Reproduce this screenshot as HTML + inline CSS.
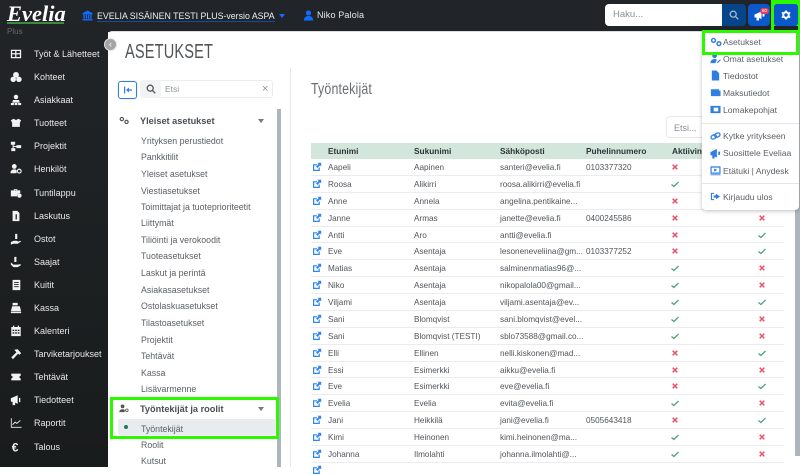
<!DOCTYPE html>
<html lang="fi"><head><meta charset="utf-8"><title>Evelia</title>
<style>
*{box-sizing:border-box}
html,body{margin:0;padding:0}
body{width:800px;height:467px;overflow:hidden;position:relative;background:#fff;font-family:"Liberation Sans",sans-serif;color:#4a4f54;font-size:9px}
.a{position:absolute;white-space:nowrap}
#top{left:0;top:0;width:800px;height:32px;background:#212529}
#side{left:0;top:0;width:108px;height:467px;background:linear-gradient(#212528,#191c1c)}
#main{left:108px;top:32px;width:692px;height:435px;background:#fff;border-top-left-radius:4px;box-shadow:0 -1px 0 #ddd}
.n{position:absolute;left:0;width:108px;height:20px;color:#e8e8e8;font-size:9px;line-height:20px;padding-left:34px;white-space:nowrap}
.n svg{position:absolute;left:10px;top:4px;width:12px;height:12px;fill:#f2f2f2}
.m{position:absolute;left:141px;font-size:8.8px;color:#5b6065;line-height:14px;white-space:nowrap}
.h{position:absolute;left:140px;font-size:9.2px;font-weight:bold;color:#4a4f54;line-height:14px;white-space:nowrap}
.car{position:absolute;width:0;height:0;border-left:3.5px solid transparent;border-right:3.5px solid transparent;border-top:4px solid #777}
#tb{left:311px;top:143px;width:473px}
.th{height:16px;background:#d2e6dc;position:relative;font-weight:bold;color:#2f3336;font-size:8.3px;line-height:16px}
.r{height:16.88px;position:relative;border-bottom:1px solid #ececec;line-height:17px;font-size:8.2px;color:#50555a}
.r span,.th span{position:absolute;white-space:nowrap}
.c1{left:17px}.c2{left:103px}.c3{left:189px}.c4{left:275px}
.r svg{position:absolute;width:10px;height:10px;top:3px}
.e{left:1px;fill:#2f86ee}
.k1{left:359px}.k2{left:446px}
.x{stroke:#e8556a;stroke-width:1.5;fill:none}
.v{stroke:#4fa37c;stroke-width:1.3;fill:none}
#dd{left:702px;top:30px;width:97px;height:180px;background:#fff;border-radius:4px;box-shadow:0 1px 4px rgba(0,0,0,.25)}
.d{position:absolute;left:723px;font-size:8.6px;color:#5b6065;line-height:14px;white-space:nowrap}
.di{position:absolute;left:710px;width:11px;height:11px;fill:#2f7fe0}
.g{position:absolute;border:3px solid #2cf800}
</style></head><body>
<svg width="0" height="0" style="position:absolute">
<symbol id="ext" viewBox="0 0 10 10"><path d="M1 2.200h4v1.200H2.200v4.400h4.400V5.500h1.200V9H1zM5.500.8H9.200V4.500L8 3.400 5.400 6 4 4.600 6.600 2z"/></symbol>
<symbol id="xx" viewBox="0 0 10 10"><path d="M2.700 2.700l4.600 4.600M7.300 2.700l-4.600 4.600"/></symbol>
<symbol id="ck" viewBox="0 0 10 10"><path d="M1.500 5.500l2.400 2L8.500 3"/></symbol>
<symbol id="gears" viewBox="0 0 14 12"><circle cx="4" cy="4" r="2.3" fill="none" stroke="currentColor" stroke-width="1.7"/><circle cx="10.5" cy="8" r="2.3" fill="none" stroke="currentColor" stroke-width="1.7"/></symbol>
</svg>

<div class="a" id="top"></div>
<div class="a" id="side"></div>

<div class="a" style="left:7px;top:2px;font:italic bold 22.5px/23px 'Liberation Serif',serif;color:#fff">Evelia</div>
<div class="a" style="left:7px;top:22px;width:57px;height:2px;background:#3c8a3c"></div>
<div class="a" style="left:7px;top:26px;font-size:8px;color:#63686c;line-height:12px">Plus</div>

<div class="n" style="top:44px"><svg viewBox="0 0 14 14"><path d="M1 2h12v10H1zM2.500 3.500v2.500h3.500V3.500zM7.500 3.500v2.500h4V3.500zM2.500 7.500v3h3.500v-3zM7.500 7.500v3h4v-3z" fill-rule="evenodd"/></svg>Työt &amp; Lähetteet</div>
<div class="n" style="top:67px"><svg viewBox="0 0 14 14"><circle cx="7" cy="4.500" r="3.400"/><circle cx="3.800" cy="9.700" r="3.200"/><circle cx="10.400" cy="9.700" r="3.200"/></svg>Kohteet</div>
<div class="n" style="top:90px"><svg viewBox="0 0 14 14"><circle cx="7" cy="3.500" r="2.600"/><path d="M3.500 7h7l1 3h-9zM1 10.500h3.500V13H1zM5.400 10.500h3.200V13H5.400zM9.500 10.500H13V13H9.500z"/></svg>Asiakkaat</div>
<div class="n" style="top:113px"><svg viewBox="0 0 14 14"><path d="M1 4l3-2 3 1.500L10 2l3 2-1.500 2.500v5h-9v-5z"/></svg>Tuotteet</div>
<div class="n" style="top:136px"><svg viewBox="0 0 14 14"><path d="M1 2h5v3.500H4.200V7h3.300V6h5.500v3.500H7.500V8.200H4.200v1.300h2V13H1.500V9.500h1.500v-4H1z"/></svg>Projektit</div>
<div class="n" style="top:159px"><svg viewBox="0 0 14 14"><circle cx="5" cy="4" r="2.800"/><path d="M.5 12c0-3 2-4.500 4.500-4.500 1.200 0 2 .3 2.700.8V12z"/><circle cx="10.800" cy="9.500" r="2.200" fill="none" stroke="#f2f2f2" stroke-width="1.400"/></svg>Henkilöt</div>
<div class="n" style="top:183px"><svg viewBox="0 0 14 14"><path d="M4.500 2.500h4v1.500H12V7a4 4 0 0 0-4 4H1V4h3.500zM5.500 3.300V4h2v-.7z"/><circle cx="11" cy="10" r="2.500"/></svg>Tuntilappu</div>
<div class="n" style="top:206px"><svg viewBox="0 0 14 14"><path d="M3 1h5.500L11 3.500V13H3zM6.500 5v6h1.500V5z" fill-rule="evenodd"/></svg>Laskutus</div>
<div class="n" style="top:229px"><svg viewBox="0 0 14 14"><path d="M6 1h2.500v6H6zM1 10.500l3.500-1.500H8l1.500 1 2.500-1 1 .7-4 2.800H4L1 13.500z"/></svg>Ostot</div>
<div class="n" style="top:252px"><svg viewBox="0 0 14 14"><path d="M5 1h2.500v6H5zM1 7.500l3 2.500h5l3.500-.5v1.500L9 13H4l-3-3z"/></svg>Saajat</div>
<div class="n" style="top:275px"><svg viewBox="0 0 14 14"><path d="M3 1h9v12H3zM4.800 3.500v1h5.400v-1zM4.800 6v1h5.400V6zM4.800 8.500v1h5.400v-1z" fill-rule="evenodd"/></svg>Kuitit</div>
<div class="n" style="top:298px"><svg viewBox="0 0 14 14"><path d="M3 1h6v3H3zM2.500 5h9l1.500 6H1zM1 11.500h12V13H1z"/></svg>Kassa</div>
<div class="n" style="top:321px"><svg viewBox="0 0 14 14"><path d="M3.500.8h1.500v1.500h4V.8h1.500v1.500H12.500V13H1.500V2.300h2zM3 5.500V7h2V5.500zM6 5.500V7h2V5.500zM9 5.500V7h2V5.500zM3 8.500V10h2V8.500zM6 8.500V10h2V8.500zM9 8.500V10h2V8.500z" fill-rule="evenodd"/></svg>Kalenteri</div>
<div class="n" style="top:344px"><svg viewBox="0 0 14 14"><path d="M5 2l4-.5 4 4.500-2 2-1.500-1.500L3.500 13 1.500 11 7.500 5z"/></svg>Tarviketarjoukset</div>
<div class="n" style="top:367px"><svg viewBox="0 0 14 14"><path d="M1.500 3h11v2.500a1.500 1.500 0 0 0 0 3V11h-11V8.500a1.500 1.500 0 0 0 0-3z"/></svg>Tehtävät</div>
<div class="n" style="top:390px"><svg viewBox="0 0 14 14"><path d="M1 5l8-3.500v10L6 10v3H3V9H1zM10.500 4.500h1.500v5h-1.500z"/></svg>Tiedotteet</div>
<div class="n" style="top:413px"><svg viewBox="0 0 14 14"><path d="M1 1.500h1V11.500h11.500v1H1z"/><path d="M3 9l3-3 2 1.500 4-3.500" fill="none" stroke="#f2f2f2" stroke-width="1.100"/></svg>Raportit</div>
<div class="n" style="top:437px"><svg viewBox="0 0 14 14"><text x="2" y="12" font-size="14" font-weight="bold" font-family="Liberation Sans" fill="#f2f2f2">€</text></svg>Talous</div>

<svg class="a" style="left:82px;top:10px;width:11px;height:11px;fill:#0d6efd" viewBox="0 0 12 12"><path d="M6 .5l5.500 3V5H.5V3.500zM1.500 5.500h1.500V9.500H1.500zM4 5.500h1.500V9.500H4zM6.500 5.500H8V9.500H6.500zM9 5.500h1.500V9.500H9zM.5 10h11v1.500H.5z"/></svg>
<div class="a" style="left:97px;top:9px;font-size:8.8px;color:#eceef0;line-height:14px;border-bottom:1px solid #0f4f9c;height:13px">EVELIA SISÄINEN TESTI PLUS-versio ASPA</div>
<div class="car" style="left:279px;top:14px;border-top:4px solid #0d6efd"></div>
<svg class="a" style="left:303px;top:10px;width:11px;height:11px;fill:#0d6efd" viewBox="0 0 12 12"><circle cx="6" cy="3.200" r="2.800"/><path d="M1 11.500c0-3.500 2-5 5-5s5 1.500 5 5z"/></svg>
<div class="a" style="left:317px;top:8px;font-size:9px;letter-spacing:.15px;color:#e6e8ea;line-height:14px">Niko Palola</div>

<div class="a" style="left:605px;top:4px;width:118px;height:22px;background:#fff;border-radius:4px 0 0 4px;color:#8a8f94;font-size:9.500px;line-height:22px;padding-left:8px">Haku...</div>
<div class="a" style="left:722px;top:4px;width:24px;height:22px;background:#06458a;border-radius:0 4px 4px 0"></div>
<svg class="a" style="left:729px;top:10px;width:10px;height:10px" viewBox="0 0 10 10" fill="none" stroke="#9fb8d4" stroke-width="1.300"><circle cx="4.200" cy="4.200" r="3"/><path d="M6.500 6.500L9.300 9.300"/></svg>
<div class="a" style="left:748px;top:4px;width:22px;height:22px;background:#0a58ca;border-radius:4px"></div>
<svg class="a" style="left:754px;top:11px;width:11px;height:10px;fill:#fff" viewBox="0 0 11 10"><path d="M.5 3.500l7-3V8L5 7v2.500H2.500V6.500H.5zM8.500 2.500h2v3h-2z"/></svg>
<div class="a" style="left:760px;top:8px;width:9px;height:6px;background:#e8405a;border-radius:3px;color:#fff;font-size:4.500px;line-height:6px;text-align:center">60</div>

<div class="a" id="main"></div>

<div class="a" style="left:104px;top:38px;width:13px;height:13px;border-radius:50%;background:#a3a5a7;border:1px solid #e4e4e4;color:#fff;font-size:9px;line-height:10px;text-align:center">‹</div>

<div class="a" style="left:125px;top:41px;font-size:20px;line-height:23px;color:#505457;transform:scaleX(.73);transform-origin:0 0;letter-spacing:.2px">ASETUKSET</div>

<div class="a" style="left:290px;top:68px;width:1px;height:399px;background:#e6e8ec"></div>
<div class="a" style="left:118px;top:81px;width:19px;height:18px;border:1px solid #2f7fe0;border-radius:3px;box-shadow:0 0 1px #8ab8ee"></div>
<svg class="a" style="left:123px;top:85px;width:10px;height:10px" viewBox="0 0 10 10" fill="#2f7fe0"><path d="M1 1.500h1.200V8.500H1zM9 4.400H6V2.500L3 5l3 2.500V5.600h3z"/></svg>
<div class="a" style="left:140px;top:80px;width:133px;height:18px;background:#fff;border:1px solid #ececec;border-radius:3px"></div>
<div class="a" style="left:140px;top:80px;width:21px;height:18px;background:#f2f3f4;border-radius:3px 0 0 3px"></div>
<svg class="a" style="left:146px;top:84px;width:10px;height:10px" viewBox="0 0 10 10" fill="none" stroke="#555" stroke-width="1.300"><circle cx="4.200" cy="4.200" r="3"/><path d="M6.500 6.500L9.300 9.300"/></svg>
<div class="a" style="left:165px;top:82px;font-size:8.500px;color:#8d9296;line-height:14px">Etsi</div>
<div class="a" style="left:262px;top:82px;font-size:11px;color:#8d9296;line-height:14px">×</div>

<div class="a" style="left:277px;top:109px;width:4px;height:358px;background:#adb5bd"></div>

<svg class="a" style="left:119px;top:116px;width:10px;height:9px;color:#555" viewBox="0 0 14 12"><use href="#gears"/></svg>
<div class="h" style="top:114px">Yleiset asetukset</div>
<div class="car" style="left:258px;top:119px"></div>
<div class="m" style="top:134px">Yrityksen perustiedot</div>
<div class="m" style="top:150px">Pankkitilit</div>
<div class="m" style="top:167px">Yleiset asetukset</div>
<div class="m" style="top:184px">Viestiasetukset</div>
<div class="m" style="top:200px">Toimittajat ja tuoteprioriteetit</div>
<div class="m" style="top:216px">Liittymät</div>
<div class="m" style="top:233px">Tiliöinti ja verokoodit</div>
<div class="m" style="top:249px">Tuoteasetukset</div>
<div class="m" style="top:266px">Laskut ja perintä</div>
<div class="m" style="top:283px">Asiakasasetukset</div>
<div class="m" style="top:299px">Ostolaskuasetukset</div>
<div class="m" style="top:316px">Tilastoasetukset</div>
<div class="m" style="top:333px">Projektit</div>
<div class="m" style="top:349px">Tehtävät</div>
<div class="m" style="top:366px">Kassa</div>
<div class="m" style="top:382px">Lisävarmenne</div>

<div class="a" style="left:118px;top:419px;width:157px;height:16px;background:#e9ecef;border-radius:2px"></div>
<div class="a" style="left:124px;top:425px;width:4px;height:4px;border-radius:50%;background:#1b7c5c"></div>
<svg class="a" style="left:119px;top:404px;width:10px;height:9px;fill:#555" viewBox="0 0 14 12"><circle cx="5" cy="3" r="2.600"/><path d="M.5 11c0-3 2-4 4.500-4 1.500 0 2.500.4 3 1v3z"/><circle cx="11" cy="8.500" r="1.800" fill="none" stroke="#555" stroke-width="1.200"/></svg>
<div class="h" style="top:402px">Työntekijät ja roolit</div>
<div class="car" style="left:258px;top:407px"></div>
<div class="m" style="top:422px">Työntekijät</div>
<div class="m" style="top:438px">Roolit</div>
<div class="m" style="top:454px">Kutsut</div>
<div class="g" style="left:110px;top:397px;width:169px;height:42px"></div>

<div class="a" style="left:311px;top:81px;font-size:15.500px;line-height:18px;color:#6a6e72;transform:scaleX(.8);transform-origin:0 0;letter-spacing:.2px">Työntekijät</div>

<div class="a" style="left:666px;top:116px;width:60px;height:22px;border:1px solid #e8e8e8;border-radius:4px;color:#8a8f94;font-size:9px;line-height:22px;padding-left:7px">Etsi...</div>

<div class="a" id="tb">
<div class="th"><span class="c1">Etunimi</span><span class="c2">Sukunimi</span><span class="c3">Sähköposti</span><span class="c4">Puhelinnumero</span><span style="left:361px">Aktiivinen</span></div>
<div class="r"><svg class="e"><use href="#ext"/></svg><span class="c1">Aapeli</span><span class="c2">Aapinen</span><span class="c3">santeri@evelia.fi</span><span class="c4">0103377320</span><svg class="k1 x"><use href="#xx"/></svg></div>
<div class="r"><svg class="e"><use href="#ext"/></svg><span class="c1">Roosa</span><span class="c2">Alikirri</span><span class="c3">roosa.alikirri@evelia.fi</span><svg class="k1 v"><use href="#ck"/></svg></div>
<div class="r"><svg class="e"><use href="#ext"/></svg><span class="c1">Anne</span><span class="c2">Annela</span><span class="c3">angelina.pentikaine...</span><svg class="k1 x"><use href="#xx"/></svg></div>
<div class="r"><svg class="e"><use href="#ext"/></svg><span class="c1">Janne</span><span class="c2">Armas</span><span class="c3">janette@evelia.fi</span><span class="c4">0400245586</span><svg class="k1 x"><use href="#xx"/></svg><svg class="k2 x"><use href="#xx"/></svg></div>
<div class="r"><svg class="e"><use href="#ext"/></svg><span class="c1">Antti</span><span class="c2">Aro</span><span class="c3">antti@evelia.fi</span><svg class="k1 x"><use href="#xx"/></svg><svg class="k2 v"><use href="#ck"/></svg></div>
<div class="r"><svg class="e"><use href="#ext"/></svg><span class="c1">Eve</span><span class="c2">Asentaja</span><span class="c3">lesoneneveliina@gm...</span><span class="c4">0103377252</span><svg class="k1 x"><use href="#xx"/></svg><svg class="k2 v"><use href="#ck"/></svg></div>
<div class="r"><svg class="e"><use href="#ext"/></svg><span class="c1">Matias</span><span class="c2">Asentaja</span><span class="c3">salminenmatias96@...</span><svg class="k1 v"><use href="#ck"/></svg><svg class="k2 x"><use href="#xx"/></svg></div>
<div class="r"><svg class="e"><use href="#ext"/></svg><span class="c1">Niko</span><span class="c2">Asentaja</span><span class="c3">nikopalola00@gmail...</span><svg class="k1 v"><use href="#ck"/></svg><svg class="k2 x"><use href="#xx"/></svg></div>
<div class="r"><svg class="e"><use href="#ext"/></svg><span class="c1">Viljami</span><span class="c2">Asentaja</span><span class="c3">viljami.asentaja@ev...</span><svg class="k1 v"><use href="#ck"/></svg><svg class="k2 v"><use href="#ck"/></svg></div>
<div class="r"><svg class="e"><use href="#ext"/></svg><span class="c1">Sani</span><span class="c2">Blomqvist</span><span class="c3">sani.blomqvist@evel...</span><svg class="k1 v"><use href="#ck"/></svg><svg class="k2 x"><use href="#xx"/></svg></div>
<div class="r"><svg class="e"><use href="#ext"/></svg><span class="c1">Sani</span><span class="c2">Blomqvist (TESTI)</span><span class="c3">sblo73588@gmail.co...</span><svg class="k1 v"><use href="#ck"/></svg><svg class="k2 x"><use href="#xx"/></svg></div>
<div class="r"><svg class="e"><use href="#ext"/></svg><span class="c1">Elli</span><span class="c2">Ellinen</span><span class="c3">nelli.kiskonen@mad...</span><svg class="k1 x"><use href="#xx"/></svg><svg class="k2 v"><use href="#ck"/></svg></div>
<div class="r"><svg class="e"><use href="#ext"/></svg><span class="c1">Essi</span><span class="c2">Esimerkki</span><span class="c3">aikku@evelia.fi</span><svg class="k1 x"><use href="#xx"/></svg><svg class="k2 x"><use href="#xx"/></svg></div>
<div class="r"><svg class="e"><use href="#ext"/></svg><span class="c1">Eve</span><span class="c2">Esimerkki</span><span class="c3">eve@evelia.fi</span><svg class="k1 x"><use href="#xx"/></svg><svg class="k2 v"><use href="#ck"/></svg></div>
<div class="r"><svg class="e"><use href="#ext"/></svg><span class="c1">Evelia</span><span class="c2">Evelia</span><span class="c3">evita@evelia.fi</span><svg class="k1 v"><use href="#ck"/></svg><svg class="k2 x"><use href="#xx"/></svg></div>
<div class="r"><svg class="e"><use href="#ext"/></svg><span class="c1">Jani</span><span class="c2">Heikkilä</span><span class="c3">jani@evelia.fi</span><span class="c4">0505643418</span><svg class="k1 x"><use href="#xx"/></svg><svg class="k2 v"><use href="#ck"/></svg></div>
<div class="r"><svg class="e"><use href="#ext"/></svg><span class="c1">Kimi</span><span class="c2">Heinonen</span><span class="c3">kimi.heinonen@ma...</span><svg class="k1 v"><use href="#ck"/></svg><svg class="k2 x"><use href="#xx"/></svg></div>
<div class="r"><svg class="e"><use href="#ext"/></svg><span class="c1">Johanna</span><span class="c2">Ilmolahti</span><span class="c3">johanna.ilmolahti@...</span><svg class="k1 v"><use href="#ck"/></svg><svg class="k2 x"><use href="#xx"/></svg></div>
</div>
<svg class="a" style="left:312px;top:465px;width:10px;height:10px;fill:#2f86ee"><use href="#ext"/></svg>

<div class="a" style="left:795px;top:32px;width:5px;height:424px;background:#adb5bd"></div>

<div class="a" id="dd"></div>
<svg class="a" style="left:710px;top:37px;width:12px;height:10px;color:#2f7fe0" viewBox="0 0 14 12"><use href="#gears"/></svg>
<div class="d" style="top:35px">Asetukset</div>
<svg class="di" style="top:53px" viewBox="0 0 12 12"><circle cx="5" cy="3" r="2.600"/><path d="M.5 11c0-3 2-4.500 4.500-4.500 1.200 0 2 .3 2.500.6L6 11zM7.500 10l3.500-3 .8.800L8.500 11z"/></svg>
<div class="d" style="top:52px">Omat asetukset</div>
<svg class="di" style="top:70px" viewBox="0 0 12 12"><path d="M2 .5h5l3 3v8H2z"/></svg>
<div class="d" style="top:69px">Tiedostot</div>
<svg class="di" style="top:87px" viewBox="0 0 12 12"><path d="M1 2.500h9V4h1.500v6H1z"/></svg>
<div class="d" style="top:86px">Maksutiedot</div>
<svg class="di" style="top:104px" viewBox="0 0 12 12"><path d="M.5 2h11v8H.5zM4 4v4h5V4z" fill-rule="evenodd"/></svg>
<div class="d" style="top:103px">Lomakepohjat</div>
<div class="a" style="left:702px;top:123px;width:97px;height:1px;background:#e6e6e6"></div>
<svg class="a" style="left:710px;top:131px;width:11px;height:10px" viewBox="0 0 12 10" fill="none" stroke="#2f7fe0" stroke-width="1.400"><rect x="1" y="4" width="6" height="4" rx="2" transform="rotate(-25 4 6)"/><rect x="5" y="2" width="6" height="4" rx="2" transform="rotate(-25 8 4)"/></svg>
<div class="d" style="top:129px">Kytke yritykseen</div>
<svg class="di" style="top:148px" viewBox="0 0 12 12"><path d="M.5 4.500l7-3.500v9.500L5 9.300V11.500H2.500V8H.5zM9 4h2v3.500H9z"/></svg>
<div class="d" style="top:146px">Suosittele Eveliaa</div>
<svg class="di" style="top:165px" viewBox="0 0 12 12"><path d="M.5 1.500h11v8H.5zM1.800 2.800v5.400h8.400V2.800z" fill-rule="evenodd"/><path d="M4.500 3.800L8 5.500 4.500 7.200zM.5 10.200h11v1H.5z"/></svg>
<div class="d" style="top:164px">Etätuki | Anydesk</div>
<div class="a" style="left:702px;top:183px;width:97px;height:1px;background:#e6e6e6"></div>
<svg class="di" style="top:191px" viewBox="0 0 12 12"><path d="M1 2h3.500v1.200H2.200v5.600h2.300V10H1zM6.500 3l4.500 3-4.500 3V7.200H4V4.800h2.500z"/></svg>
<div class="d" style="top:190px">Kirjaudu ulos</div>

<div class="g" style="left:702px;top:30px;width:97px;height:25px"></div>
<div class="a" style="left:771px;top:0;width:29px;height:33px;background:#2cf800"></div>
<div class="a" style="left:774px;top:4px;width:24px;height:22px;background:#0a58ca;border-radius:3px"></div>
<div class="a" style="left:774px;top:26px;width:24px;height:4px;background:#212529"></div>
<svg class="a" style="left:781px;top:10px;width:10px;height:10px" viewBox="0 0 12 12"><circle cx="6" cy="6" r="3.300" fill="none" stroke="#fff" stroke-width="2.400"/><path d="M6 .5v2M6 9.500v2M.9 3l1.800 1M9.300 8l1.800 1M.9 9l1.800-1M9.300 4l1.800-1" stroke="#fff" stroke-width="1.800"/></svg>
</body></html>
